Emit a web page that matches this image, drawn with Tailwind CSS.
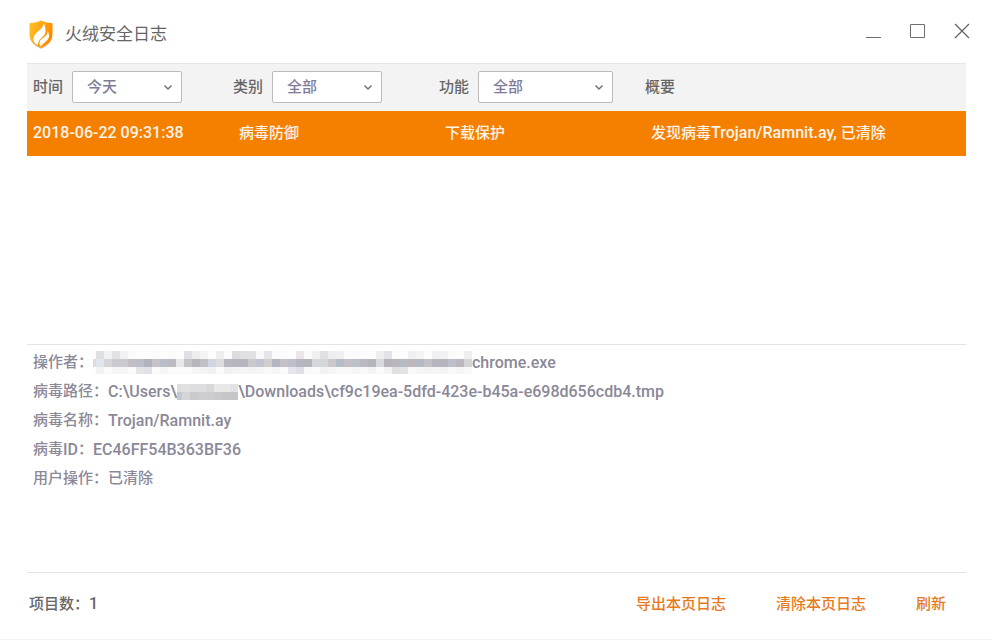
<!DOCTYPE html>
<html lang="zh-CN">
<head>
  <meta charset="UTF-8">
  <meta name="viewport" content="width=device-width, initial-scale=1">
  <title>火绒安全日志</title>
  <script src="https://cdn.jsdelivr.net/npm/@tailwindcss/browser@4"></script>
</head>
<body class="bg-white">
  <div class="flex flex-col min-h-screen pl-[27px] pr-[26px] font-[Roboto,'Noto_Sans_CJK_SC',sans-serif] text-[15px] leading-[29px] font-medium text-[#666] border-b border-[#f4f4f4]">

    <!-- 标题栏 -->
    <header class="flex items-center justify-between h-[63px] shrink-0">
      <div class="flex items-center gap-2.5 pt-1.5">
        <svg class="w-7 h-8" viewBox="0 0 28 32" aria-hidden="true">
          <defs>
            <linearGradient id="shield" x1="0" y1="0" x2="1" y2="0.4">
              <stop offset="0" stop-color="#ffc328"/>
              <stop offset="1" stop-color="#ff8a00"/>
            </linearGradient>
          </defs>
          <path d="M14 30C7 27 3 23 3 16V6Q3 5 4 5C8 5 11 4 14 2.500C17 4 20 5 24 5Q25 5 25 6V16C25 23 21 27 14 30Z" fill="#d9d2c8"/>
          <path d="M14 29C7 26 2.500 22 2.500 15V5Q2.500 4 3.500 4C8 4 11 3 14 1.500C17 3 20 4 24.500 4Q25.500 4 25.500 5V15C25.500 22 21 26 14 29Z" fill="url(#shield)"/>
          <path d="M16.500 4C17.500 10 7 13 6.500 19C6 22.500 8 25 11 26C10 20 18.500 18 18.500 12.500C18.500 9 18 6 16.500 4Z" fill="#fff"/>
          <path d="M20.500 12C21.500 18 12.500 19 12.500 24C12.500 25.500 13 26.500 14 27.500C15.500 24 22 22 22 17C22 15 21.500 13.500 20.500 12Z" fill="#fff"/>
        </svg>
        <h1 class="text-[17px] font-normal">火绒安全日志</h1>
      </div>
      <div class="flex items-center gap-7 -mr-1 pb-0.5">
        <button type="button" aria-label="最小化"><svg class="block w-4 h-4" viewBox="0 0 16 16" fill="none" stroke="#707070"><path d="M0 14.500H15"/></svg></button>
        <button type="button" aria-label="最大化"><svg class="block w-4 h-4" viewBox="0 0 16 16" fill="none" stroke="#707070"><path d="M.5 1.500H14.500V14.500H.5Z"/></svg></button>
        <button type="button" aria-label="关闭"><svg class="block w-4 h-4" viewBox="0 0 16 16" fill="none" stroke="#606060" stroke-width="1.2"><path d="M1 1L15 15M15 1L1 15"/></svg></button>
      </div>
    </header>

    <!-- 日志列表 -->
    <main class="h-[281px]">
      <table class="w-full table-fixed text-left">
        <thead>
          <tr class="h-[47px] bg-[#f3f3f3] border-t border-[#e6e6e6]">
            <th class="w-[206px] pl-1.5 font-medium">
              <div class="flex items-center gap-[9px]">
                <label for="time">时间</label>
                <div class="relative">
                  <select id="time" class="block appearance-none w-[110px] h-8 pl-3.5 bg-white border border-[#bbb] rounded-xs text-[#7f7b9a]"><option>今天</option></select>
                  <svg class="absolute right-2 top-2.5 w-3 h-3 pointer-events-none" viewBox="0 0 12 12" fill="none" stroke="#707070" stroke-width="1.5"><path d="M2.500 4.500L6 8L9.500 4.500"/></svg>
                </div>
              </div>
            </th>
            <th class="w-[206px] font-medium">
              <div class="flex items-center gap-[9px]">
                <label for="type">类别</label>
                <div class="relative">
                  <select id="type" class="block appearance-none w-[110px] h-8 pl-3.5 bg-white border border-[#bbb] rounded-xs text-[#7f7b9a]"><option>全部</option></select>
                  <svg class="absolute right-2 top-2.5 w-3 h-3 pointer-events-none" viewBox="0 0 12 12" fill="none" stroke="#707070" stroke-width="1.5"><path d="M2.500 4.500L6 8L9.500 4.500"/></svg>
                </div>
              </div>
            </th>
            <th class="w-[206px] font-medium">
              <div class="flex items-center gap-[9px]">
                <label for="func">功能</label>
                <div class="relative">
                  <select id="func" class="block appearance-none w-[135px] h-8 pl-3.5 bg-white border border-[#bbb] rounded-xs text-[#7f7b9a]"><option>全部</option></select>
                  <svg class="absolute right-2 top-2.5 w-3 h-3 pointer-events-none" viewBox="0 0 12 12" fill="none" stroke="#707070" stroke-width="1.5"><path d="M2.500 4.500L6 8L9.500 4.500"/></svg>
                </div>
              </div>
            </th>
            <th class="font-medium">概要</th>
          </tr>
        </thead>
        <tbody>
          <tr class="h-[45px] bg-[#f58000] text-[#fff4e8]">
            <td class="pl-1.5 text-base">2018-06-22 09:31:38</td>
            <td class="pl-1.5">病毒防御</td>
            <td class="pl-1.5">下载保护</td>
            <td class="pl-1.5">发现病毒<span class="text-base">Trojan/Ramnit.ay, </span>已清除</td>
          </tr>
        </tbody>
      </table>
    </main>

    <!-- 详细信息 -->
    <section class="grow px-1.5 pt-[3px] border-t border-[#e4e4e4] text-[#8b8898]">
      <p class="flex items-center">操作者：<svg id="maskPath" class="w-[379px] h-[23px]" viewBox="5 0 379 23" shape-rendering="crispEdges" aria-hidden="true"></svg><span class="text-base leading-[29px]">chrome.exe</span></p>
      <p class="flex items-center">病毒路径：<span class="text-base leading-[29px]">C:\Users\</span><svg id="maskUser" class="w-[61px] h-4" viewBox="3 0 61 16" shape-rendering="crispEdges" aria-hidden="true"></svg><span class="text-base leading-[29px]">\Downloads\cf9c19ea-5dfd-423e-b45a-e698d656cdb4.tmp</span></p>
      <p class="flex items-center">病毒名称：<span class="text-base leading-[29px]">Trojan/Ramnit.ay</span></p>
      <p class="flex items-center">病毒<span class="text-base leading-[29px]">ID</span>：<span class="text-base leading-[29px]">EC46FF54B363BF36</span></p>
      <p>用户操作：已清除</p>
    </section>

    <!-- 底部操作 -->
    <footer class="flex items-center justify-between h-[67px] shrink-0 pl-0.5 pr-5 pb-[3px] border-t border-[#e4e4e4]">
      <p>项目数：<span class="text-base">1</span></p>
      <div class="flex gap-[50px] text-[#e87a1c]">
        <button type="button">导出本页日志</button>
        <button type="button">清除本页日志</button>
        <button type="button">刷新</button>
      </div>
    </footer>
  </div>

  <script>
    // 马赛克遮挡，每格 8px
    const pathRows = [
      'fbfbfb dfe0e4 f0f1f3 e2e1e5 f1f2f5 fbfbfb fdfdfd fdfdfd fbfbfb fdfdfd fbfbfb fdfdfd dfe0e5 eeeeee f4f4f4 fdfdfd eeeeee fbfbfb dcdcdf e0e0e2 e0e1e4 f8f8f8 e4e5ea fafafa fbfbfb fdfdfd eee5ea fbfbfb f0f0f0 e0e0e2 eeeeee f0f0f0 fbfbfb fbfbfb fdfdfd fdfdfd eeeef0 e4e4e8 fbfbfb fdfdfd f0f0f2 f4f4f4 fdfdfd eef0f4 f2f2f2 fbfbfb fdfdfd eeeeee',
      'dfdadb e0e5ee d6d6da c9c9cf c9c9cf c2bec4 bcbfc9 b2b2c0 c6c2c8 b9bdca bcbac2 e8e8e8 c4c4c8 b5b5bb c1c1c5 cfd5e2 dcdcde b9b6c0 b6b5c0 b6b5c0 cbc8ca c2c2d0 d2cdce b5b4c2 c6c1c6 bdc0cb b7b5c2 b5b5be d6d7dc d6d7dc cbc7ca b5bcca c4bec5 bbc0c9 b9b8c3 b5b5bd d9dadf b7b4bc b9b6c0 b5bac5 beb6bb b5b9c4 c2c1c5 b6b5c2 b6b5be bcc0cc beb7bc d4d5d9',
      'fdfdfd f2f2f2 fafafa f5f5f5 f5f5f5 fafafa e4e4e6 dfe2e8 fafafa f6f6f6 fafafa fafafa fafafa f5f5f5 f3f3f3 f1f1f1 fafafa f1f1f1 f3f3f3 f5f5f5 f3f3f3 f5f5f5 f8f8f8 f5f5f5 fafafa e6e6ea dfdfe8 f8f8f8 fafafa f2f2f2 f5f5f5 f8f8f8 f8f8f8 f5f5f5 f8f8f8 f3f3f3 fafafa f3f3f3 e0e0e0 e3e3e5 f8f8f8 f5f5f5 f3f3f3 f5f5f5 f3f3f3 f8f8f8 f5f5f5 f8f8f8'
    ];
    const userRows = [
      'dedee0 e1e1e3 dedee0 dedee1 d8d8da e8e8e8 e8e8e8 e2e2e6',
      'c8c8cb d6d6d8 cacace cdcdd0 cdcdd0 c9c9cd c6c6ca c6c6ca'
    ];

    function drawMask(id, rows) {
      const svg = document.getElementById(id);
      rows.forEach((row, y) => {
        row.split(' ').forEach((color, x) => {
          const rect = document.createElementNS('http://www.w3.org/2000/svg', 'rect');
          rect.setAttribute('x', x * 8);
          rect.setAttribute('y', y * 8);
          rect.setAttribute('width', 8);
          rect.setAttribute('height', 8);
          rect.setAttribute('fill', '#' + color);
          svg.appendChild(rect);
        });
      });
    }

    drawMask('maskPath', pathRows);
    drawMask('maskUser', userRows);
  </script>
</body>
</html>
